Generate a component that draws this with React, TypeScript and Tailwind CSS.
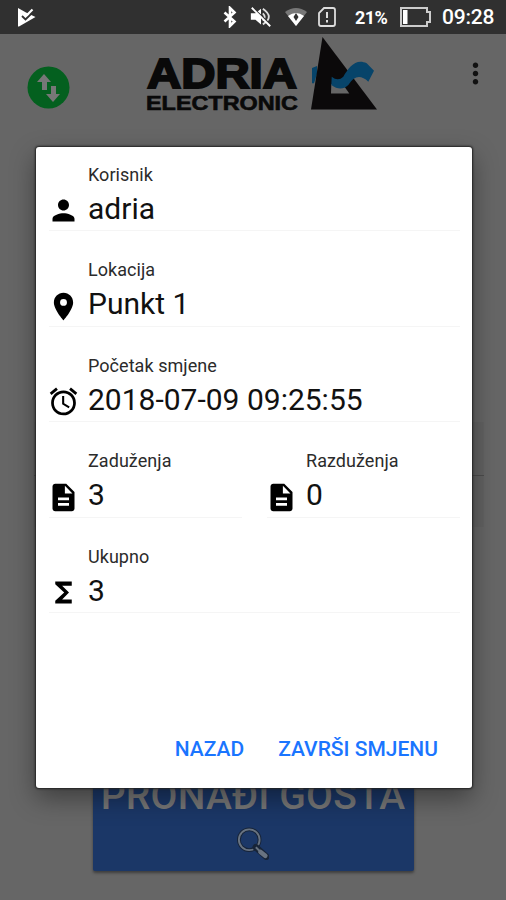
import type { ReactNode } from 'react';
import { MdAccessAlarm, MdDescription, MdFunctions, MdLocationOn, MdMoreVert, MdPerson } from 'react-icons/md';

interface FieldProps {
  icon: ReactNode;
  label: string;
  value: string;
}

function Field({ icon, label, value }: FieldProps) {
  return (
    <div className="flex h-[83px] w-full border-b border-[#f5f5f5]">
      <div className="flex w-[39px] shrink-0 items-end pb-[3px] text-[33px]">
        <span className="-ml-[2px]">{icon}</span>
      </div>
      <div className="pt-[15.600px]">
        <div className="text-[18px] leading-[22px] tracking-[0.050px] text-[#2b2b2b]">{label}</div>
        <div className="mt-[5px] text-[30px] leading-[36px] whitespace-nowrap text-[#111]">{value}</div>
      </div>
    </div>
  );
}

function StatusBar() {
  return (
    <div className="flex h-[34px] items-center bg-[#303030] pr-[10px] pl-[17px] text-white">
      <svg width="20" height="22" viewBox="0 0 20 22">
        <path d="M1 2 9 6.500 18.500 11 2 20.500H1z" fill="#fff" />
        <path d="m5 10 3.500 3.500 9-9" fill="none" stroke="#303030" strokeWidth="1.800" />
        <path d="m9.500 9.500 6-6" fill="none" stroke="#fff" strokeWidth="2.200" />
      </svg>
      <svg className="ml-auto" width="14" height="22" viewBox="0 0 14 22">
        <path d="m1.500 6.500 10 9L7 20V2l4.500 4.500-10 9" fill="none" stroke="#fff" strokeWidth="2.600" />
      </svg>
      <svg className="ml-[12px]" width="24" height="24" viewBox="0 0 26 24">
        <path d="M2 8h5l6-5v17l-6-5H2z" fill="#fff" />
        <path d="M15 8q4 4 0 8M15 3q13 9 0 17" fill="none" stroke="#ddd" strokeWidth="2" />
        <path d="m3 1 21 20" stroke="#303030" strokeWidth="2" />
        <path d="m3 2 20 20" stroke="#fff" strokeWidth="2" />
      </svg>
      <svg className="ml-[11px]" width="24" height="21" viewBox="0 0 24 21">
        <path d="M1 5q11-8 22 0L12 19z" fill="#777" />
        <path d="M4 9q8-6 16 0l-8 10z" fill="#fff" />
        <path d="m12 6 2.500 4L12 14l-2.500-4z" fill="#303030" />
      </svg>
      <svg className="ml-[10px]" width="18" height="20" viewBox="0 0 18 20">
        <path d="M6 1h9q2 0 2 2v14q0 2-2 2H3q-2 0-2-2V6z" fill="none" stroke="#ddd" strokeWidth="1.800" />
        <path d="M9 5v6M9 13v2.500" stroke="#ddd" strokeWidth="2" />
      </svg>
      <span className="ml-[19px] w-[32px] text-[18px] font-bold tracking-[-0.600px] whitespace-nowrap">21%</span>
      <svg className="ml-[13px]" width="32" height="20" viewBox="0 0 32 20">
        <path d="M1 1h26v4h3v10h-3v4H1z" fill="none" stroke="#ccc" strokeWidth="2" />
        <path d="M3 3h4.500v14H3z" fill="#fff" />
      </svg>
      <span className="ml-[10px] w-[54px] pt-[2px] text-[21px] font-medium tracking-[-0.200px] whitespace-nowrap">09:28</span>
    </div>
  );
}

function Logo() {
  return (
    <svg width="236" height="80" viewBox="0 0 236 80" fill="#090909" fontFamily="Liberation Sans, sans-serif" fontWeight="700">
      <text x="3" y="53.500" fontSize="42" textLength="150" lengthAdjust="spacingAndGlyphs" stroke="#090909" strokeWidth="2">ADRIA</text>
      <text x="2" y="75.500" fontSize="19.500" textLength="152" lengthAdjust="spacingAndGlyphs" stroke="#090909" strokeWidth="0.600">ELECTRONIC</text>
      <path d="m168 34 5-2v8l-3 9.300h-2z" fill="#07446a" />
      <path d="M178.500 3 233 75.500H167z" fill="#0b090a" />
      <path d="m187.300 50 12 1 6 8.500H187z" fill="#666" />
      <path d="M187.700 42.700Q194 48 199.300 42.700C205 33 212 24 222.700 29.300L230 36.700 224.300 47.700Q213 37 204.300 51 197 58 187.300 51z" fill="#07446a" />
    </svg>
  );
}

function ShiftDialog() {
  return (
    <div className="absolute top-[147px] left-[36px] flex h-[641px] w-[436px] flex-col rounded-[3px] bg-white pt-px pr-[12px] pl-[13px] text-black shadow-[0_0_2px_1px_#222,0_10px_26px_rgba(0,0,0,0.4)]">
      <div className="flex flex-col gap-[12.600px]">
        <Field icon={<MdPerson />} label="Korisnik" value="adria" />
        <Field icon={<MdLocationOn />} label="Lokacija" value="Punkt 1" />
        <Field icon={<MdAccessAlarm />} label="Početak smjene" value="2018-07-09 09:25:55" />
        <div className="flex gap-[25px]">
          <Field icon={<MdDescription />} label="Zaduženja" value="3" />
          <Field icon={<MdDescription />} label="Razduženja" value="0" />
        </div>
        <Field icon={<MdFunctions />} label="Ukupno" value="3" />
      </div>
      <div className="mt-auto flex justify-end gap-[34px] pr-[22px] pb-[25px] text-[21px] leading-[28px] font-medium text-[#1a75ff]">
        <button>NAZAD</button>
        <button>ZAVRŠI SMJENU</button>
      </div>
    </div>
  );
}

export default function App() {
  return (
    <div className="relative flex h-[900px] w-[506px] flex-col overflow-hidden bg-[#666] font-['Roboto',sans-serif]">
      <StatusBar />
      <header className="flex h-[100px] items-start pr-[14px] pl-[27px]">
        <svg className="mt-[32px]" width="43" height="43" viewBox="0 0 43 43">
          <circle cx="21.500" cy="21.500" r="21" fill="#04601f" />
          <path d="m17 8 7 8h-4v8h-5v-8h-5z" fill="#777" />
          <path d="M24 20h5v8h4l-7 8-7-8h5z" fill="#777" />
        </svg>
        <div className="ml-[74px]">
          <Logo />
        </div>
        <MdMoreVert className="mt-[23px] ml-auto text-[33px] text-[#111]" />
      </header>
      <main className="flex flex-1 flex-col items-center">
        <div className="mt-[288px] mr-[22px] ml-[34px] flex h-[105px] flex-col self-stretch bg-[#626262]">
          <div className="mt-[53px] border-t border-[#4d4d4d]" />
        </div>
        <div className="mt-auto mb-[29px] flex h-[109px] w-[321px] flex-col items-center rounded-[2px] bg-[#1b3767] shadow-[0_2px_3px_rgba(0,0,0,0.4)]">
          <span className="mt-[11px] text-[39px] leading-[46px] font-medium tracking-[0.200px] whitespace-nowrap text-[#777]">PRONAĐI GOSTA</span>
          <svg className="mt-[8px]" width="32" height="33" viewBox="0 0 34 34" fill="none">
            <circle cx="13" cy="13" r="11" stroke="#172438" strokeWidth="4" />
            <circle cx="13" cy="13" r="11" stroke="#687381" strokeWidth="2" />
            <path d="m20 21 11 10" stroke="#172438" strokeWidth="7" strokeLinecap="round" />
            <path d="m20 21 4 4" stroke="#687381" strokeWidth="2" />
            <path d="m25 26 5 4" stroke="#687381" strokeWidth="5" strokeLinecap="round" />
          </svg>
        </div>
      </main>
      <ShiftDialog />
    </div>
  );
}
